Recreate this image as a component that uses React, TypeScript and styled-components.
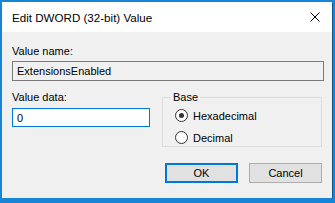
import React from "react";
import styled, { createGlobalStyle } from "styled-components";

const GlobalStyle = createGlobalStyle`
  html, body {
    margin: 0;
    padding: 0;
    background: #1784d6;
  }
  body {
    font-family: "Liberation Sans", Arial, sans-serif;
    font-size: 11px;
    color: #000;
  }
`;

const Window = styled.div`
  margin: 2px 3px 0 2px;
  width: 330px;
  height: 196px;
  background: #f0f0f0;
  box-shadow: 1px 1px 0 #0b5a96;
  display: flex;
  flex-direction: column;
`;

const TitleBar = styled.div`
  height: 30px;
  background: #fff;
  display: flex;
  align-items: center;
  justify-content: space-between;
  padding: 0 12px 0 10px;
  font-size: 11.6px;
`;

const Close = styled.svg`
  width: 10px;
  height: 10px;
`;

const Body = styled.div`
  padding: 13px 8px 0 10px;
  display: flex;
  flex-direction: column;
`;

const Label = styled.div`
  line-height: 13px;
  height: 13px;
`;

const ReadOnlyBox = styled.div`
  margin-top: 3px;
  height: 18px;
  border: 1px solid #7a7a7a;
  background: #f0f0f0;
  padding-left: 4px;
  display: flex;
  align-items: center;
`;

const LowerRow = styled.div`
  margin-top: 10px;
  display: flex;
`;

const LeftCol = styled.div`
  width: 138px;
  display: flex;
  flex-direction: column;
`;

const Input = styled.div`
  margin-top: 4px;
  height: 17px;
  border: 1px solid #0078d7;
  background: #fff;
  padding-left: 4px;
  display: flex;
  align-items: center;
`;

const Group = styled.fieldset`
  margin: 0 0 0 12px;
  width: 160px;
  height: 56px;
  box-sizing: border-box;
  border: 1px solid #dcdcdc;
  padding: 5px 0 0 12px;
  display: flex;
  flex-direction: column;
  gap: 9px;
`;

const Legend = styled.legend`
  padding: 0 2px;
  margin-left: -4px;
  line-height: 13px;
`;

const RadioRow = styled.div`
  display: flex;
  align-items: center;
  gap: 5px;
  height: 13px;
`;

const RadioCircle = styled.span<{ $checked?: boolean }>`
  width: 11px;
  height: 11px;
  border: 1px solid #333;
  border-radius: 50%;
  background: #fff;
  display: flex;
  align-items: center;
  justify-content: center;
  &::after {
    content: "";
    width: 5px;
    height: 5px;
    border-radius: 50%;
    background: ${(p) => (p.$checked ? "#333" : "transparent")};
  }
`;

const Buttons = styled.div`
  margin-top: 16px;
  display: flex;
  justify-content: flex-end;
  gap: 11px;
  padding-right: 2px;
`;

const Button = styled.div<{ $default?: boolean }>`
  width: 73px;
  height: 20px;
  box-sizing: border-box;
  background: #e1e1e1;
  border: ${(p) => (p.$default ? "2px solid #0078d7" : "1px solid #adadad")};
  display: flex;
  align-items: center;
  justify-content: center;
`;

export default function App() {
  return (
    <>
      <GlobalStyle />
      <Window>
        <TitleBar>
          <span>Edit DWORD (32-bit) Value</span>
          <Close viewBox="0 0 10 10">
            <path d="M0.5 0.5 L9.5 9.5 M9.5 0.5 L0.5 9.5" stroke="#000" strokeWidth="1" />
          </Close>
        </TitleBar>
        <Body>
          <Label>Value name:</Label>
          <ReadOnlyBox>ExtensionsEnabled</ReadOnlyBox>
          <LowerRow>
            <LeftCol>
              <Label>Value data:</Label>
              <Input>0</Input>
            </LeftCol>
            <Group>
              <Legend>Base</Legend>
              <RadioRow>
                <RadioCircle $checked />
                Hexadecimal
              </RadioRow>
              <RadioRow>
                <RadioCircle />
                Decimal
              </RadioRow>
            </Group>
          </LowerRow>
          <Buttons>
            <Button $default>OK</Button>
            <Button>Cancel</Button>
          </Buttons>
        </Body>
      </Window>
    </>
  );
}
